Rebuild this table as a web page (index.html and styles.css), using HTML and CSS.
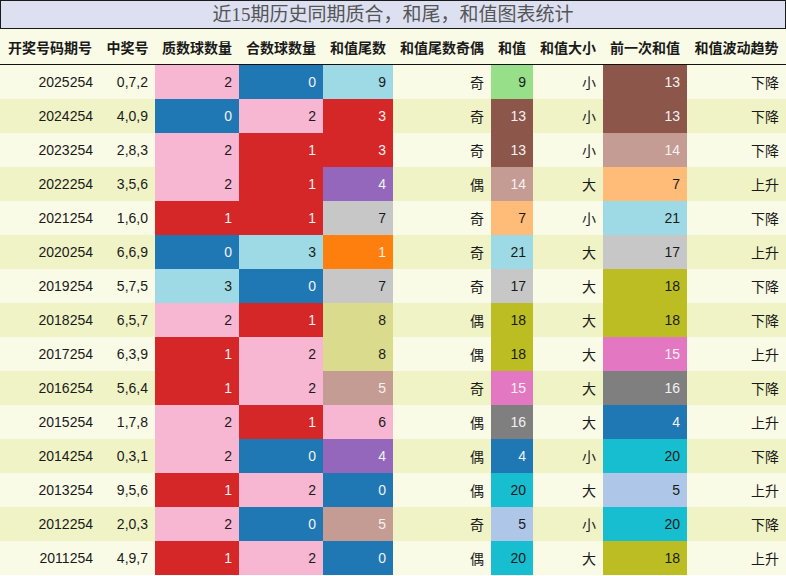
FILE: index.html
```html
<!DOCTYPE html>
<html lang="zh">
<head>
<meta charset="utf-8">
<link rel="stylesheet" href="styles.css">
</head>
<body>
<div class="page">
  <div class="title">近15期历史同期质合，和尾，和值图表统计</div>
  <div class="table">
    <div class="row head">
      <div>开奖号码期号</div><div>中奖号</div><div>质数球数量</div><div>合数球数量</div><div>和值尾数</div><div>和值尾数奇偶</div><div>和值</div><div>和值大小</div><div>前一次和值</div><div>和值波动趋势</div>
    </div>
    <div class="row">
      <div>2025254</div><div>0,7,2</div><div class="pink">2</div><div class="blue">0</div><div class="lblue">9</div><div class="cjk">奇</div><div class="green">9</div><div class="cjk">小</div><div class="brown">13</div><div class="cjk">下降</div>
    </div>
    <div class="row">
      <div>2024254</div><div>4,0,9</div><div class="blue">0</div><div class="pink">2</div><div class="red">3</div><div class="cjk">奇</div><div class="brown">13</div><div class="cjk">小</div><div class="brown">13</div><div class="cjk">下降</div>
    </div>
    <div class="row">
      <div>2023254</div><div>2,8,3</div><div class="pink">2</div><div class="red">1</div><div class="red">3</div><div class="cjk">奇</div><div class="brown">13</div><div class="cjk">小</div><div class="lbrown">14</div><div class="cjk">下降</div>
    </div>
    <div class="row">
      <div>2022254</div><div>3,5,6</div><div class="pink">2</div><div class="red">1</div><div class="purple">4</div><div class="cjk">偶</div><div class="lbrown">14</div><div class="cjk">大</div><div class="lorange">7</div><div class="cjk">上升</div>
    </div>
    <div class="row">
      <div>2021254</div><div>1,6,0</div><div class="red">1</div><div class="red">1</div><div class="lgrey">7</div><div class="cjk">奇</div><div class="lorange">7</div><div class="cjk">小</div><div class="lblue">21</div><div class="cjk">下降</div>
    </div>
    <div class="row">
      <div>2020254</div><div>6,6,9</div><div class="blue">0</div><div class="lblue">3</div><div class="orange">1</div><div class="cjk">奇</div><div class="lblue">21</div><div class="cjk">大</div><div class="lgrey">17</div><div class="cjk">上升</div>
    </div>
    <div class="row">
      <div>2019254</div><div>5,7,5</div><div class="lblue">3</div><div class="blue">0</div><div class="lgrey">7</div><div class="cjk">奇</div><div class="lgrey">17</div><div class="cjk">大</div><div class="olive">18</div><div class="cjk">下降</div>
    </div>
    <div class="row">
      <div>2018254</div><div>6,5,7</div><div class="pink">2</div><div class="red">1</div><div class="lolive">8</div><div class="cjk">偶</div><div class="olive">18</div><div class="cjk">大</div><div class="olive">18</div><div class="cjk">下降</div>
    </div>
    <div class="row">
      <div>2017254</div><div>6,3,9</div><div class="red">1</div><div class="pink">2</div><div class="lolive">8</div><div class="cjk">偶</div><div class="olive">18</div><div class="cjk">大</div><div class="magenta">15</div><div class="cjk">上升</div>
    </div>
    <div class="row">
      <div>2016254</div><div>5,6,4</div><div class="red">1</div><div class="pink">2</div><div class="lbrown">5</div><div class="cjk">奇</div><div class="magenta">15</div><div class="cjk">大</div><div class="grey">16</div><div class="cjk">下降</div>
    </div>
    <div class="row">
      <div>2015254</div><div>1,7,8</div><div class="pink">2</div><div class="red">1</div><div class="pink">6</div><div class="cjk">偶</div><div class="grey">16</div><div class="cjk">大</div><div class="blue">4</div><div class="cjk">上升</div>
    </div>
    <div class="row">
      <div>2014254</div><div>0,3,1</div><div class="pink">2</div><div class="blue">0</div><div class="purple">4</div><div class="cjk">偶</div><div class="blue">4</div><div class="cjk">小</div><div class="cyan">20</div><div class="cjk">下降</div>
    </div>
    <div class="row">
      <div>2013254</div><div>9,5,6</div><div class="red">1</div><div class="pink">2</div><div class="blue">0</div><div class="cjk">偶</div><div class="cyan">20</div><div class="cjk">大</div><div class="sky">5</div><div class="cjk">上升</div>
    </div>
    <div class="row">
      <div>2012254</div><div>2,0,3</div><div class="pink">2</div><div class="blue">0</div><div class="lbrown">5</div><div class="cjk">奇</div><div class="sky">5</div><div class="cjk">小</div><div class="cyan">20</div><div class="cjk">下降</div>
    </div>
    <div class="row">
      <div>2011254</div><div>4,9,7</div><div class="red">1</div><div class="pink">2</div><div class="blue">0</div><div class="cjk">偶</div><div class="cyan">20</div><div class="cjk">大</div><div class="olive">18</div><div class="cjk">上升</div>
    </div>
  </div>
</div>
</body>
</html>
```

FILE: styles.css
```css
* { box-sizing: border-box; }
html, body { margin: 0; padding: 0; background: #ffffff; }
.page {
  width: 786px;
  font-family: "Liberation Sans", "Noto Sans CJK SC", sans-serif;
  font-size: 14px;
  color: #1a1a1a;
}
.title {
  height: 29px;
  border: 1px solid #1a1a1a;
  background: #dce0f1;
  color: #555555;
  font-family: "Liberation Serif", "Noto Sans CJK SC", serif;
  font-size: 19px;
  line-height: 27px;
  text-align: center;
}
.table {
  display: flex;
  flex-direction: column;
}
.row {
  display: grid;
  grid-template-columns: 100px 55px 84px 84px 70px 98px 42px 70px 84px 99px;
  height: 34px;
  background: #f9fbe6;
}
.row:nth-child(odd) { background: #eff3c6; }
.row > div {
  display: flex;
  align-items: center;
  justify-content: flex-end;
  padding-right: 7px;
  white-space: nowrap;
}
.row.head {
  height: 36px;
  background: #fafbe7;
  border-bottom: 1px solid #111111;
  font-weight: bold;
  font-family: "Noto Sans CJK SC", sans-serif;
  color: #1a1a1a;
}
.row.head > div {
  justify-content: center;
  padding: 0;
}
.cjk { font-family: "Noto Sans CJK SC", sans-serif; }

.pink { background: #f7b6d2; }
.blue { background: #1f77b4; color: #f2f2f2; }
.lblue { background: #9edae5; }
.red { background: #d62728; color: #f2f2f2; }
.green { background: #98df8a; }
.brown { background: #8c564b; color: #f2f2f2; }
.lbrown { background: #c49c94; color: #f2f2f2; }
.purple { background: #9467bd; color: #f2f2f2; }
.lorange { background: #ffbb78; }
.lgrey { background: #c7c7c7; }
.orange { background: #ff7f0e; color: #f2f2f2; }
.olive { background: #bcbd22; }
.lolive { background: #dbdb8d; }
.magenta { background: #e377c2; color: #f2f2f2; }
.grey { background: #7f7f7f; color: #f2f2f2; }
.cyan { background: #17becf; }
.sky { background: #aec7e8; }
```
